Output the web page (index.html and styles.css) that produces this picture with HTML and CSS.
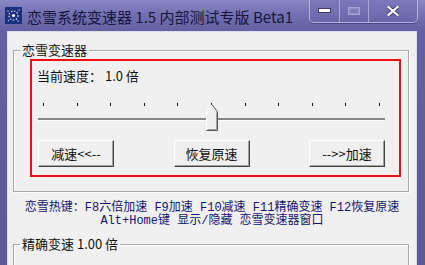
FILE: index.html
```html
<!DOCTYPE html>
<html lang="zh-CN">
<head>
    <meta charset="UTF-8">
    <title>恋雪系统变速器 1.5 内部测试专版 Beta1</title>
    <link rel="stylesheet" href="styles.css">
</head>
<body>

    <div class="window">
        <div class="titlebar">
            <svg class="app-icon" width="17" height="17" viewBox="0 0 17 17">
                <rect x="0" y="0" width="17" height="17" fill="#1c2f7a"/>
                <circle cx="8.5" cy="8.5" r="4.5" fill="none" stroke="#cfe0ff" stroke-width="1.2" stroke-dasharray="1.5 1.5"/>
                <circle cx="8.5" cy="8.5" r="1.6" fill="#ffffff"/>
                <circle cx="3" cy="4" r="0.8" fill="#9fc0ff"/>
                <circle cx="14" cy="3" r="0.8" fill="#9fc0ff"/>
                <circle cx="13" cy="14" r="0.8" fill="#9fc0ff"/>
                <circle cx="3.5" cy="13.5" r="0.8" fill="#9fc0ff"/>
            </svg>
            <span class="title">恋雪系统变速器 1.5 内部测试专版 Beta1</span>
            <div class="caption-btns">
                <div class="cap cap-min">
                    <svg width="13" height="5" viewBox="0 0 13 5"><rect x="0.5" y="0.5" width="12" height="4" fill="#fff" stroke="#3d3a70"/></svg>
                </div>
                <div class="cap cap-max">
                    <svg width="12" height="8" viewBox="0 0 12 8"><rect x="0.5" y="0.5" width="11" height="7" fill="#8e8cc6" stroke="#a6a4d6"/><rect x="2.5" y="2.5" width="7" height="3" fill="#7c79b6"/></svg>
                </div>
                <div class="cap cap-close">
                    <svg width="12" height="10" viewBox="0 0 12 10">
                        <path d="M1.5 1 L10.5 9 M10.5 1 L1.5 9" stroke="#3d3a70" stroke-width="4" stroke-linecap="square"/>
                        <path d="M1.5 1 L10.5 9 M10.5 1 L1.5 9" stroke="#fff" stroke-width="2.2" stroke-linecap="square"/>
                    </svg>
                </div>
            </div>
        </div>

        <div class="client">
            <fieldset class="group group-main">
                <legend>恋雪变速器</legend>
                <div class="speed-box">
                    <div class="speed-label">当前速度： 1.0 倍</div>
                    <div class="slider">
                        <div class="ticks">
                            <span class="tick"></span><span class="tick"></span><span class="tick"></span>
                            <span class="tick"></span><span class="tick"></span><span class="tick"></span>
                            <span class="tick"></span><span class="tick"></span><span class="tick"></span>
                            <span class="tick"></span><span class="tick"></span>
                        </div>
                        <div class="track"></div>
                        <svg class="thumb" width="12" height="28" viewBox="0 0 12 28">
                            <polygon points="0.5,9 6,1.5 11.5,9 11.5,27.5 0.5,27.5" fill="#f0f0f0"/>
                            <polyline points="0.5,27 0.5,9 6,1.5" fill="none" stroke="#ffffff"/>
                            <polyline points="6,1.5 11.5,9 11.5,27.5 0.5,27.5" fill="none" stroke="#555"/>
                            <polyline points="1.5,26.5 10.5,26.5 10.5,9.5" fill="none" stroke="#a0a0a0"/>
                        </svg>
                    </div>
                    <div class="btn-row">
                        <button class="btn">减速&lt;&lt;--</button>
                        <button class="btn">恢复原速</button>
                        <button class="btn">--&gt;&gt;加速</button>
                    </div>
                </div>
            </fieldset>

            <div class="hotkeys">
                恋雪热键：F8六倍加速 F9加速 F10减速 F11精确变速 F12恢复原速<br>
                Alt+Home键 显示/隐藏 恋雪变速器窗口
            </div>

            <fieldset class="group group-fine">
                <legend>精确变速 1.00 倍</legend>
            </fieldset>
        </div>
    </div>

</body>
</html>
```

FILE: styles.css
```css
body {
    margin: 0;
    padding: 0;
    font-family: "Noto Sans CJK SC", "DejaVu Sans", sans-serif;
    background: #5e5b9c;
    overflow: hidden;
}
.window {
    width: 425px;
    height: 265px;
    padding: 0 8px 0 7px;
    box-sizing: border-box;
    background: linear-gradient(180deg, #8a87c6 0px, #7471b3 14px, #6461a2 31px, #5c5998 100%);
    overflow: hidden;
}
.titlebar {
    display: flex;
    align-items: flex-start;
    height: 31px;
    margin: 0 -8px 0 -7px;
}
.app-icon {
    margin: 7px 0 0 5px;
    flex-shrink: 0;
}
.title {
    margin: 7px 0 0 5px;
    font-size: 15px;
    line-height: 20px;
    color: #15153a;
    white-space: nowrap;
}
.caption-btns {
    display: flex;
    margin: -1px 7px 0 auto;
    height: 23px;
    border: 1px solid #b2b0e0;
    border-top: none;
    border-radius: 0 0 5px 5px;
    background: linear-gradient(180deg, #7d7abc, #6a67a8);
    box-shadow: 0 1px 0 #4c4986;
}
.cap {
    display: flex;
    align-items: center;
    justify-content: center;
}
.cap-min {
    width: 29px;
}
.cap-max {
    width: 28px;
    border-left: 1px solid #a9a7d9;
    border-right: 1px solid #a9a7d9;
}
.cap-close {
    width: 48px;
}
.client {
    height: 234px;
    background: #f0f0f0;
    border: 1px solid #dcdcec;
    border-bottom: none;
    overflow: hidden;
}
.group {
    border: 1px solid #a8a8a8;
    box-shadow: inset 1px 1px 0 #fff, 1px 1px 0 #fff;
    margin: 0;
}
.group legend {
    font-size: 13px;
    line-height: 16px;
    padding: 0 2px;
    margin-left: -10px;
    color: #111;
}
.group-main {
    margin: 10px 7px 0 5px;
    padding: 1px 7px 14px 16px;
}
.speed-box {
    border: 2px solid #ee1010;
    padding: 7px 14px 8px 6px;
}
.speed-label {
    font-size: 13px;
    line-height: 16px;
    margin-left: -1px;
    color: #111;
    white-space: nowrap;
}
.slider {
    position: relative;
    height: 28px;
    margin-top: 19px;
}
.ticks {
    display: flex;
    justify-content: space-between;
    padding: 0 5px;
    height: 3px;
}
.tick {
    width: 1px;
    height: 3px;
    background: #111;
}
.track {
    margin-top: 12px;
    height: 2px;
    background: #858585;
    border-bottom: 1px solid #fff;
}
.thumb {
    position: absolute;
    left: 168px;
    top: 0;
}
.btn-row {
    display: flex;
    justify-content: space-between;
    margin-top: 9px;
}
.btn {
    width: 76px;
    height: 27px;
    padding: 0;
    font-family: "Noto Sans CJK SC", sans-serif;
    font-size: 13px;
    color: #111;
    background: #f0f0f0;
    border: 1px solid;
    border-color: #fff #444 #444 #fff;
    box-shadow: inset -1px -1px 0 #a0a0a0;
}
.hotkeys {
    margin-top: 10px;
    font-family: "Liberation Mono", "Noto Sans CJK SC", monospace;
    font-size: 12px;
    line-height: 13px;
    color: #14146e;
    text-align: center;
    white-space: nowrap;
}
.group-fine {
    margin: 8px 7px 0 5px;
    padding: 0 7px 0 16px;
    height: 60px;
}
```
